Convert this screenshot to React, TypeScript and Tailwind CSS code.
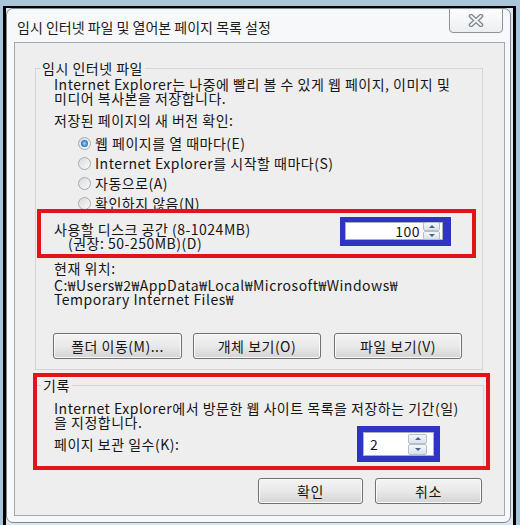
import React from "react";

function Radio({ checked }: { checked?: boolean }) {
    return (
        <span className="w-[13px] h-[13px] shrink-0 rounded-full border border-[#a3abb3] bg-linear-to-br from-[#d6d9dc] to-[#fbfbfb] flex items-center justify-center">
            {checked && <span className="w-[7px] h-[7px] rounded-full bg-radial from-[#a8dcf8] via-[#3a8ed0] to-[#1b4f8a]" />}
        </span>
    );
}

function Spinner({ big }: { big?: boolean }) {
    const half = "flex-1 flex items-center justify-center border border-[#b3bfcc] rounded-[2px] bg-linear-to-b from-[#f4f7fa] to-[#d9e2ea]";
    return (
        <div className={big ? "w-[19px] h-[21px] flex flex-col" : "w-[17px] h-[18px] flex flex-col"}>
            <div className={half}>
                <span className="w-0 h-0 border-x-[3px] border-x-transparent border-b-[3px] border-b-[#4a6386]" />
            </div>
            <div className={half}>
                <span className="w-0 h-0 border-x-[3px] border-x-transparent border-t-[3px] border-t-[#4a6386]" />
            </div>
        </div>
    );
}

function Btn({ label, w }: { label: string; w: string }) {
    return (
        <div className={`${w} h-[26px] rounded-[3px] border border-[#707070] bg-linear-to-b from-[#f4f4f4] via-[#e9e9e9] to-[#d4d4d4] shadow-[inset_0_0_0_1px_#fbfbfb] flex items-center justify-center text-[14px] leading-none`}>
            {label}
        </div>
    );
}

export default function App() {
    return (
        <div className="w-[520px] h-[525px] bg-[#a8c5d9] pl-[3px] pt-[6px] overflow-hidden font-['Noto_Sans_CJK_KR','Noto_Sans',sans-serif] text-[#151515]">
            <div className="w-[513px] h-[525px] border-l-[3px] border-r-[3px] border-t-[2px] border-black bg-[#dde6ee]">
                <div className="w-[505px] h-[515px] rounded-[7px] border border-[#7b8894] bg-[#f6f8fa] flex flex-col">
                    {/* title bar */}
                    <div className="relative h-[33px] shrink-0 flex items-center pl-[10px] pt-[2px]">
                        <span className="text-[14px] leading-none text-[#1c1c1c]">임시 인터넷 파일 및 열어본 페이지 목록 설정</span>
                        <div className="absolute top-[-1px] right-[7px] w-[54px] h-[25px] rounded-b-[4px] border border-[#8d9298] bg-linear-to-b from-[#fdfdfd] to-[#eceff2] flex items-center justify-center">
                            <svg width="16" height="13" viewBox="0 0 16 13">
                                <path d="M3 2 L13 11 M13 2 L3 11" stroke="#858a90" strokeWidth="4.6" strokeLinecap="round" />
                                <path d="M3 2 L13 11 M13 2 L3 11" stroke="#f2f4f6" strokeWidth="1.8" strokeLinecap="round" />
                            </svg>
                        </div>
                    </div>

                    {/* client area */}
                    <div className="flex-1 ml-[7px] mr-[5px] mb-[6px] border border-[#a5a9ad] bg-[#eeeeee] pt-[17px] text-[14px] tracking-[0.5px]">
                        <fieldset className="ml-[20px] w-[448px] border border-[#d3d6d9] pb-[10px]">
                            <legend className="ml-[4px] px-[2px] leading-[16px]">임시 인터넷 파일</legend>
                            <div className="pl-[18px] pt-[1px] leading-[14px]">
                                <div>Internet Explorer는 나중에 빨리 볼 수 있게 웹 페이지, 이미지 및</div>
                                <div>미디어 복사본을 저장합니다.</div>
                                <div className="mt-[8px]">저장된 페이지의 새 버전 확인:</div>
                            </div>
                            <div className="mt-[6px] pl-[42px]">
                                <div className="h-[20px] flex items-center gap-[4px]"><Radio checked />웹 페이지를 열 때마다(E)</div>
                                <div className="h-[20px] flex items-center gap-[4px]"><Radio />Internet Explorer를 시작할 때마다(S)</div>
                                <div className="h-[20px] flex items-center gap-[4px]"><Radio />자동으로(A)</div>
                                <div className="h-[20px] flex items-center gap-[4px]"><Radio />확인하지 않음(N)</div>
                            </div>
                            <div className="relative -mt-[4px] ml-[1px] w-[439px] h-[49px] border-[4px] border-[#e1141c] flex items-start pl-[13px] pr-[21px]">
                                <div className="pt-[9px] leading-[14px]">
                                    <div>사용할 디스크 공간 (8-1024MB)</div>
                                    <div className="pl-[14px]">(권장: 50-250MB)(D)</div>
                                </div>
                                <div className="ml-auto mt-[4px] w-[111px] h-[29px] border-t-[5px] border-l-[5px] border-b-[6px] border-r-[8px] border-[#2f35c2] bg-[#e4e6ee]">
                                    <div className="w-[98px] h-[18px] bg-white border border-[#abb1ba] flex items-center justify-end pr-[2px]">
                                        <span className="leading-none mr-[3px]">100</span>
                                        <Spinner />
                                    </div>
                                </div>
                            </div>
                            <div className="pl-[18px] leading-[14px]">
                                <div className="mt-[3px]">현재 위치:</div>
                                <div className="mt-[3px]">C:₩Users₩2₩AppData₩Local₩Microsoft₩Windows₩</div>
                                <div>Temporary Internet Files₩</div>
                            </div>
                            <div className="mt-[27px] pl-[17px] flex">
                                <Btn label="폴더 이동(M)..." w="w-[129px]" />
                                <div className="w-[11px]" />
                                <Btn label="개체 보기(O)" w="w-[128px]" />
                                <div className="w-[13px]" />
                                <Btn label="파일 보기(V)" w="w-[128px]" />
                            </div>
                        </fieldset>

                        <div className="mt-[3px] ml-[18px] w-[457px] border-[4px] border-[#e1141c]">
                            <fieldset className="w-[447px] border-t border-r border-[#d3d6d9] pb-[4px]">
                                <legend className="ml-[4px] px-[2px] leading-[16px]">기록</legend>
                                <div className="pl-[17px] mt-[8px] leading-[14px]">
                                    <div>Internet Explorer에서 방문한 웹 사이트 목록을 저장하는 기간(일)</div>
                                    <div>을 지정합니다.</div>
                                </div>
                                <div className="-mt-[3px] pl-[17px] pr-[43px] flex items-center">
                                    <span className="leading-[14px]">페이지 보관 일수(K):</span>
                                    <div className="ml-auto w-[83px] h-[36px] border-[6px] border-[#2f35c2] bg-white">
                                        <div className="w-[71px] h-[24px] border border-[#abb1ba] bg-white flex items-center pl-[6px] pr-[6px]">
                                            <span className="leading-none">2</span>
                                            <div className="ml-auto"><Spinner big /></div>
                                        </div>
                                    </div>
                                </div>
                            </fieldset>
                        </div>

                        <div className="mt-[8px] pr-[22px] flex justify-end gap-[12px]">
                            <Btn label="확인" w="w-[105px]" />
                            <Btn label="취소" w="w-[107px]" />
                        </div>
                    </div>
                </div>
            </div>
        </div>
    );
}
